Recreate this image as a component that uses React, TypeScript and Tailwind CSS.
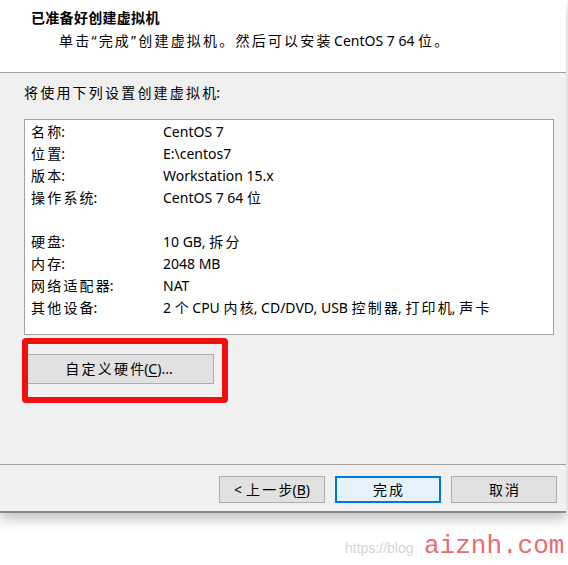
import type { JSX, ReactNode } from "react";

const rows: Array<[string, string]> = [
    ["名称:", "CentOS 7"],
    ["位置:", "E:\\centos7"],
    ["版本:", "Workstation 15.x"],
    ["操作系统:", "CentOS 7 64 位"],
    ["", ""],
    ["硬盘:", "10 GB, 拆分"],
    ["内存:", "2048 MB"],
    ["网络适配器:", "NAT"],
    ["其他设备:", "2 个 CPU 内核, CD/DVD, USB 控制器, 打印机, 声卡"],
]

const font = "font-['Noto_Sans','Noto_Sans_CJK_SC',sans-serif]"
const CJK = /[\u3000-\u9fff\uff00-\uffef“”]/

// the dialog's CJK glyphs run a bit wider than Noto's, so spread them out
// (the last glyph of a run keeps no trailing space, so commas stay tight)
const cjk = (text: string): ReactNode =>
    text.split(/([\u3000-\u9fff\uff00-\uffef“”]+)/).map((part, i) =>
        CJK.test(part)
            ? <span key={i}><span className="tracking-[2.2px]">{part.slice(0, -1)}</span>{part.slice(-1)}</span>
            : part
    )

export default function App(): JSX.Element {
    return (
        <div className={`relative w-[568px] h-[565px] bg-white text-black text-[14px] ${font}`}>
            {/* Dialog */}
            <div className="flex flex-col w-[566px] shadow-[0_6px_12px_rgba(0,0,0,0.25)]">

                {/* Header */}
                <div className="flex flex-col h-[73px] bg-white border-b border-[#a0a0a0] pl-[31px] pt-[7px] leading-[22px]">
                    <span className="font-bold tracking-[0.3px]">已准备好创建虚拟机</span>
                    <span className="pl-[28px] pt-[1px]">{cjk("单击“完成”创建虚拟机。然后可以安装 CentOS 7 64 位。")}</span>
                </div>

                {/* Body */}
                <div className="flex flex-col h-[392px] bg-[#f0f0f0] border-b border-[#a0a0a0] pl-[24px] pt-[9px]">
                    <span className="leading-[22px]">{cjk("将使用下列设置创建虚拟机:")}</span>

                    <div className="flex flex-col w-[530px] h-[216px] mt-[15px] bg-white border border-[#a0a0a0] pl-[6px] pt-[1px]">
                        {rows.map(([label, value], i) => (
                            <div key={i} className="flex h-[22px] leading-[22px]">
                                <span className="w-[132px]">{cjk(label)}</span>
                                <span>{cjk(value)}</span>
                            </div>
                        ))}
                    </div>

                    {/* Customize hardware */}
                    <div className="relative mt-[19px] w-[190px]">
                        <button className="w-[190px] h-[30px] bg-[#e1e1e1] border border-[#adadad] leading-[28px]">
                            {cjk("自定义硬件")}(<span className="underline underline-offset-2">C</span>)...
                        </button>
                        {/* red annotation */}
                        <div className="absolute left-[-2px] top-[-16px] w-[206px] h-[65px] border-[6px] border-[#f01010] rounded-[4px]"></div>
                    </div>
                </div>

                {/* Footer */}
                <div className="flex justify-end gap-[10px] h-[48px] bg-[#f0f0f0] border-b-2 border-[#8a8a8a] pt-[11px] pr-[9px]">
                    <button className="w-[106px] h-[27px] bg-[#e1e1e1] border border-[#adadad] leading-[25px]">
                        <span className="pr-[4px]">&lt;</span>{cjk("上一步")}(<span className="underline underline-offset-2">B</span>)
                    </button>
                    <button className="w-[106px] h-[27px] bg-[#e5f1fb] border-2 border-[#0078d7] leading-[23px]">
                        {cjk("完成")}
                    </button>
                    <button className="w-[106px] h-[27px] bg-[#e1e1e1] border border-[#adadad] leading-[25px]">
                        {cjk("取消")}
                    </button>
                </div>
            </div>

            {/* Watermark */}
            <span className="absolute left-[345px] top-[538px] text-[14px] leading-[20px] text-[#d4d4d4] font-['Liberation_Sans',sans-serif]">https://blog</span>
            <span className="absolute left-[424px] top-[530px] text-[26px] leading-[32px] text-[#e8555c]/90 font-['Liberation_Mono',monospace]">aiznh.com</span>
        </div>
    )
}
